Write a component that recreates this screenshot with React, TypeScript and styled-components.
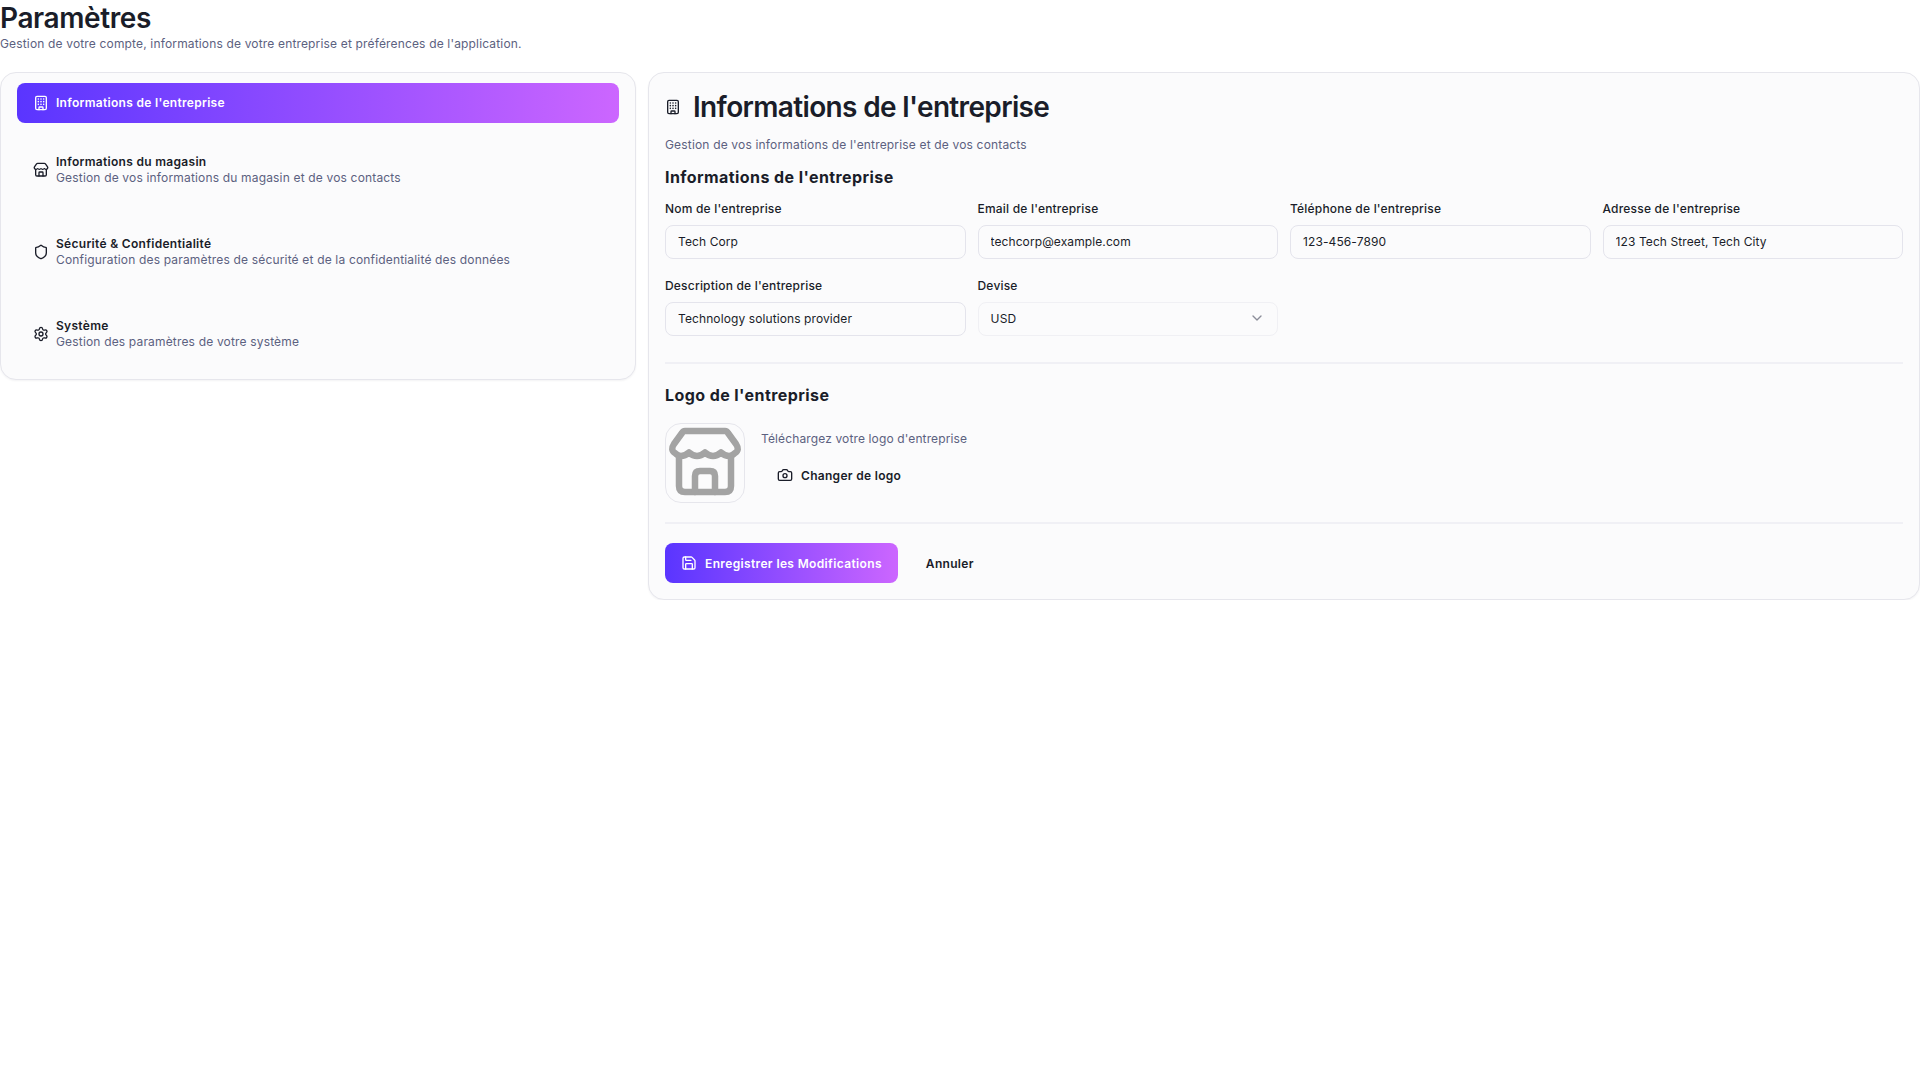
import React from 'react';
import styled, { createGlobalStyle } from 'styled-components';
import { Camera, ChevronDown, Save, Settings, Shield, Store } from 'lucide-react';

const GlobalStyle = createGlobalStyle`
  body {
    margin: 0;
    background: #ffffff;
    color: #1a1d29;
    font-family: Inter, "Noto Sans", sans-serif;
  }
`;

const Page = styled.div`
  width: 1920px;
`;

const Header = styled.header`
  height: 72px;
`;

const PageTitle = styled.h1`
  margin: 0;
  font-size: 28px;
  line-height: 36px;
  font-weight: 600;
  letter-spacing: -0.4px;
`;

const PageSubtitle = styled.p`
  margin: 0;
  font-size: 12px;
  line-height: 16px;
  letter-spacing: 0.16px;
  color: #5c6180;
`;

const Columns = styled.div`
  display: grid;
  grid-template-columns: 636px 1272px;
  gap: 12px;
  align-items: start;
`;

const Card = styled.section`
  background: #fbfbfc;
  border: 1px solid #e6e6ec;
  border-radius: 16px;
  box-shadow: 0 1px 2px rgba(20, 20, 40, 0.05);
`;

const SideCard = styled(Card)`
  display: flex;
  flex-direction: column;
  gap: 12px;
  padding: 10px 16px;
`;

const NavItem = styled.div<{ $active?: boolean }>`
  display: flex;
  align-items: center;
  gap: 7px;
  height: ${(p) => (p.$active ? '40px' : '70px')};
  padding: 0 16px;
  border-radius: 8px;
  background: ${(p) => (p.$active ? 'linear-gradient(90deg, #5a35ff, #cc66ff)' : 'transparent')};
  color: ${(p) => (p.$active ? '#ffffff' : '#1a1d29')};
`;

const NavText = styled.div`
  display: flex;
  flex-direction: column;
`;

const NavLabel = styled.span`
  font-size: 12px;
  line-height: 16px;
  font-weight: 600;
  letter-spacing: 0.3px;
`;

const NavHint = styled.span`
  font-size: 12px;
  line-height: 16px;
  letter-spacing: 0.17px;
  color: #5c6180;
`;

const MainCard = styled(Card)`
  padding: 16px;
`;

const MainHead = styled.div`
  display: flex;
  align-items: center;
  gap: 12px;
  height: 36px;
`;

const MainTitle = styled.h2`
  margin: 0;
  font-size: 28px;
  line-height: 36px;
  font-weight: 600;
  letter-spacing: -0.65px;
`;

const MainHint = styled.p`
  margin: 12px 0 0;
  font-size: 12px;
  line-height: 16px;
  letter-spacing: 0.17px;
  color: #5c6180;
`;

const SectionTitle = styled.h3`
  margin: 0;
  font-size: 16px;
  line-height: 24px;
  font-weight: 700;
  letter-spacing: 0.42px;
`;

const InfoSection = styled.div`
  margin-top: 12px;
`;

const FieldGrid = styled.div`
  display: grid;
  grid-template-columns: repeat(4, 1fr);
  gap: 19px 12px;
  margin-top: 12px;
`;

const Field = styled.div`
  display: flex;
  flex-direction: column;
  gap: 8px;
`;

const FieldLabel = styled.label`
  font-size: 12px;
  line-height: 16px;
  font-weight: 500;
  letter-spacing: 0.2px;
`;

const Input = styled.input`
  box-sizing: border-box;
  width: 100%;
  height: 34px;
  padding: 0 12px 2px;
  background: #fbfbfc;
  border: 1px solid #e4e4ec;
  border-radius: 8px;
  font-family: inherit;
  font-size: 12px;
  letter-spacing: 0.1px;
  color: #1a1d29;
`;

const Select = styled.div`
  box-sizing: border-box;
  display: flex;
  align-items: center;
  justify-content: space-between;
  height: 34px;
  padding: 0 12px 2px;
  border: 1px solid #f0f0f4;
  border-radius: 8px;
  font-size: 12px;
  letter-spacing: 0.2px;
  color: #8b8d99;

  span {
    color: #1a1d29;
  }
`;

const Divider = styled.hr<{ $top: number }>`
  margin: ${(p) => p.$top}px 0 0;
  border: 0;
  border-top: 2px solid #f0f0f5;
`;

const LogoSection = styled.div`
  margin-top: 19px;
`;

const LogoRow = styled.div`
  display: flex;
  gap: 16px;
  margin-top: 16px;
`;

const LogoBox = styled.div`
  box-sizing: border-box;
  width: 80px;
  height: 80px;
  border: 1px solid #e6e6ec;
  border-radius: 16px;
  overflow: hidden;
`;

const LogoActions = styled.div`
  display: flex;
  flex-direction: column;
  align-items: flex-start;
  gap: 8px;
  padding-top: 8px;
`;

const LogoHint = styled.p`
  margin: 0;
  font-size: 12px;
  line-height: 16px;
  letter-spacing: 0.13px;
  color: #5c6180;
`;

const GhostButton = styled.button`
  display: flex;
  align-items: center;
  gap: 8px;
  height: 40px;
  padding: 0 16px;
  border: 0;
  border-radius: 8px;
  background: transparent;
  font-family: inherit;
  font-size: 12px;
  font-weight: 600;
  letter-spacing: 0.3px;
  color: #1a1d29;
`;

const Actions = styled.div`
  display: flex;
  gap: 12px;
  margin-top: 19px;
`;

const PrimaryButton = styled(GhostButton)`
  background: linear-gradient(90deg, #5a35ff, #cc66ff);
  color: #ffffff;
  letter-spacing: 0.36px;
`;

function BuildingIcon({ size = 16 }: { size?: number }) {
  const dots = [6, 10, 14].flatMap((y) => [8, 12, 16].map((x) => ({ x, y })));
  return (
    <svg width={size} height={size} viewBox="0 0 24 24" fill="none" stroke="currentColor" strokeWidth="2" strokeLinecap="round" strokeLinejoin="round">
      <rect x="4" y="2" width="16" height="20" rx="2" />
      <path d="M9 22v-3a1 1 0 0 1 1-1h4a1 1 0 0 1 1 1v3" />
      {dots.map((dot) => (
        <circle key={`${dot.x}-${dot.y}`} cx={dot.x} cy={dot.y} r="1.2" fill="currentColor" stroke="none" />
      ))}
    </svg>
  );
}

function LogoStore() {
  return (
    <svg width="78" height="78" viewBox="1 1 78 78" fill="none" stroke="#a3a3a3" strokeWidth="6.5" strokeLinecap="round" strokeLinejoin="round">
      <path d="M20 8H60Q62 8 63 10L71 21Q75 27 70 30Q67 33 64 33Q60 33 56 29.5Q52 33 48 33Q44 33 40 29.5Q36 33 32 33Q28 33 24 29.5Q20 33 16 33Q13 33 10 30Q5 27 9 21L17 10Q18 8 20 8Z" />
      <path d="M14 33V63Q14 69 20 69H60Q66 69 66 63V33" />
      <path d="M30 69V53Q30 48 35 48H45Q50 48 50 53V69" />
    </svg>
  );
}

interface NavEntry {
  icon: React.ComponentType<{ size?: number }>;
  label: string;
  hint?: string;
}

const navEntries: NavEntry[] = [
  { icon: BuildingIcon, label: "Informations de l'entreprise" },
  { icon: Store, label: 'Informations du magasin', hint: 'Gestion de vos informations du magasin et de vos contacts' },
  {
    icon: Shield,
    label: 'Sécurité & Confidentialité',
    hint: 'Configuration des paramètres de sécurité et de la confidentialité des données',
  },
  { icon: Settings, label: 'Système', hint: 'Gestion des paramètres de votre système' },
];

const fields = [
  { label: "Nom de l'entreprise", value: 'Tech Corp' },
  { label: "Email de l'entreprise", value: 'techcorp@example.com' },
  { label: "Téléphone de l'entreprise", value: '123-456-7890' },
  { label: "Adresse de l'entreprise", value: '123 Tech Street, Tech City' },
  { label: "Description de l'entreprise", value: 'Technology solutions provider' },
];

export default function App() {
  return (
    <Page>
      <GlobalStyle />
      <Header>
        <PageTitle>Paramètres</PageTitle>
        <PageSubtitle>Gestion de votre compte, informations de votre entreprise et préférences de l'application.</PageSubtitle>
      </Header>
      <Columns>
        <SideCard>
          {navEntries.map((entry) => (
            <NavItem key={entry.label} $active={!entry.hint}>
              <entry.icon size={16} />
              <NavText>
                <NavLabel>{entry.label}</NavLabel>
                {entry.hint && <NavHint>{entry.hint}</NavHint>}
              </NavText>
            </NavItem>
          ))}
        </SideCard>
        <MainCard>
          <MainHead>
            <BuildingIcon size={16} />
            <MainTitle>Informations de l'entreprise</MainTitle>
          </MainHead>
          <MainHint>Gestion de vos informations de l'entreprise et de vos contacts</MainHint>
          <InfoSection>
            <SectionTitle>Informations de l'entreprise</SectionTitle>
            <FieldGrid>
              {fields.map((field) => (
                <Field key={field.label}>
                  <FieldLabel>{field.label}</FieldLabel>
                  <Input defaultValue={field.value} />
                </Field>
              ))}
              <Field>
                <FieldLabel>Devise</FieldLabel>
                <Select>
                  <span>USD</span>
                  <ChevronDown size={16} />
                </Select>
              </Field>
            </FieldGrid>
          </InfoSection>
          <Divider $top={26} />
          <LogoSection>
            <SectionTitle>Logo de l'entreprise</SectionTitle>
            <LogoRow>
              <LogoBox>
                <LogoStore />
              </LogoBox>
              <LogoActions>
                <LogoHint>Téléchargez votre logo d'entreprise</LogoHint>
                <GhostButton>
                  <Camera size={16} />
                  Changer de logo
                </GhostButton>
              </LogoActions>
            </LogoRow>
          </LogoSection>
          <Divider $top={19} />
          <Actions>
            <PrimaryButton>
              <Save size={16} />
              Enregistrer les Modifications
            </PrimaryButton>
            <GhostButton>Annuler</GhostButton>
          </Actions>
        </MainCard>
      </Columns>
    </Page>
  );
}
